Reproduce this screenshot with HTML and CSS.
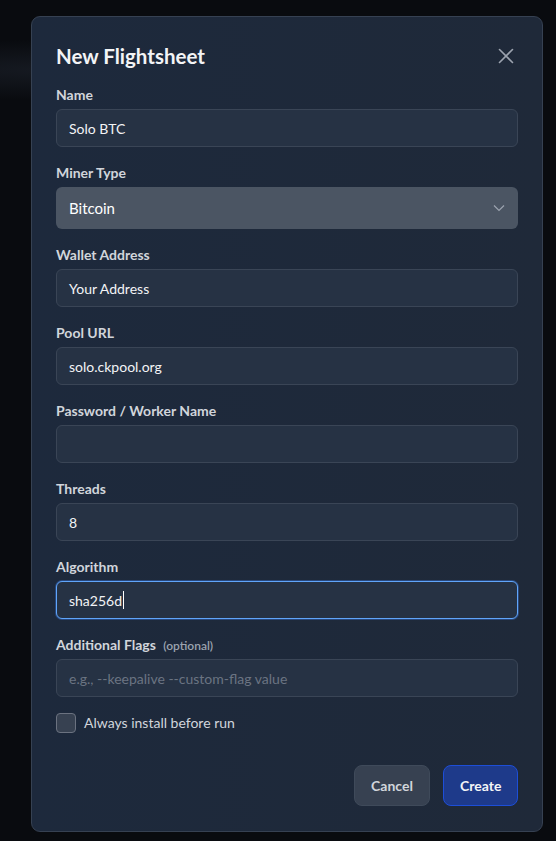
FILE: index.html
```html
<!DOCTYPE html>
<html>
<head>
<meta charset="utf-8">
<link rel="stylesheet" href="styles.css">
</head>
<body>
<div class="backdrop">
  <div class="modal">
    <div class="header">
      <h2 class="title">New Flightsheet</h2>
      <button class="close" aria-label="Close">
        <svg width="16" height="16" viewBox="0 0 16 16"><path d="M1.5 1.5 L14.5 14.5 M14.5 1.5 L1.5 14.5" stroke="#9ca3af" stroke-width="1.6" stroke-linecap="round" fill="none"/></svg>
      </button>
    </div>
    <div class="field">
      <label class="label">Name</label>
      <div class="input">Solo BTC</div>
    </div>
    <div class="field">
      <label class="label">Miner Type</label>
      <div class="select">
        <span>Bitcoin</span>
        <svg width="12" height="8" viewBox="0 0 12 8"><path d="M1 1.5 L6 6.5 L11 1.5" stroke="#9ca3af" stroke-width="1.2" fill="none"/></svg>
      </div>
    </div>
    <div class="field">
      <label class="label">Wallet Address</label>
      <div class="input">Your Address</div>
    </div>
    <div class="field">
      <label class="label">Pool URL</label>
      <div class="input">solo.ckpool.org</div>
    </div>
    <div class="field">
      <label class="label">Password / Worker Name</label>
      <div class="input"></div>
    </div>
    <div class="field">
      <label class="label">Threads</label>
      <div class="input">8</div>
    </div>
    <div class="field">
      <label class="label">Algorithm</label>
      <div class="input focus">sha256d<span class="caret"></span></div>
    </div>
    <div class="field">
      <label class="label">Additional Flags <span class="opt">(optional)</span></label>
      <div class="input placeholder">e.g., --keepalive --custom-flag value</div>
    </div>
    <div class="check-row">
      <span class="checkbox"></span>
      <span class="check-label">Always install before run</span>
    </div>
    <div class="actions">
      <button class="btn cancel">Cancel</button>
      <button class="btn create">Create</button>
    </div>
  </div>
</div>
</body>
</html>
```
FILE: styles.css
```css
* { box-sizing: border-box; }
html, body { margin: 0; padding: 0; }
body {
  background: #090b0f;
  font-family: Lato, "Noto Sans", sans-serif;
  width: 556px;
  height: 841px;
  overflow: hidden;
}
.backdrop {
  padding-top: 16px;
  padding-left: 31px;
  background: radial-gradient(ellipse 300px 30px at 60px 70px, #161a22 0%, rgba(9,11,15,0) 100%), #090b0f;
  height: 841px;
}
.modal {
  width: 512px;
  height: 816px;
  background: linear-gradient(90deg, #1d293c 0%, #1f2939 100%);
  border: 1px solid #364152;
  border-radius: 9px;
  padding: 25px 24px 0 24px;
  display: flex;
  flex-direction: column;
}
.header {
  display: flex;
  align-items: center;
  justify-content: space-between;
  height: 28px;
  margin-bottom: 15px;
}
.title {
  margin: 0;
  font-size: 20.5px;
  font-weight: 700;
  color: #f3f4f6;
  line-height: 28px;
}
.close {
  background: none;
  border: none;
  padding: 0;
  margin-right: 4px;
  width: 16px;
  height: 16px;
  display: flex;
}
.field {
  display: flex;
  flex-direction: column;
  margin-bottom: 16px;
}
.label {
  font-size: 14px;
  font-weight: 700;
  color: #d1d5db;
  line-height: 20px;
  height: 20px;
  margin-bottom: 4px;
  display: block;
}
.opt {
  font-size: 12px;
  font-weight: 600;
  color: #9ca3af;
  margin-left: 4px;
  line-height: 1;
}
.input {
  height: 38px;
  background: #263244;
  border: 1px solid #3a4556;
  border-radius: 6px;
  padding: 0 12px;
  display: flex;
  align-items: center;
  font-size: 14px;
  color: #f3f4f6;
}
.input.focus {
  border-color: #60a5fa;
  box-shadow: 0 0 0 1px rgba(59,130,246,0.35);
}
.caret {
  display: inline-block;
  width: 1px;
  height: 18px;
  background: #ffffff;
  margin-left: 1px;
}
.input.placeholder { color: #6b7482; }
.select {
  height: 42px;
  background: #4b5563;
  border-radius: 6px;
  padding: 0 13px 0 13px;
  display: flex;
  align-items: center;
  justify-content: space-between;
  font-size: 15px;
  color: #ffffff;
}
.check-row {
  display: flex;
  align-items: center;
  gap: 8px;
  height: 20px;
}
.checkbox {
  flex: none;
  width: 20px;
  height: 20px;
  border: 1px solid #6b7280;
  border-radius: 4px;
  background: #374151;
}
.check-label {
  font-size: 14px;
  color: #d1d5db;
  line-height: 20px;
}
.actions {
  display: flex;
  justify-content: flex-end;
  gap: 13px;
  margin-top: 32px;
}
.btn {
  height: 41px;
  border-radius: 8px;
  font-family: inherit;
  font-size: 14px;
  font-weight: 700;
  padding: 0 16px;
}
.cancel {
  background: #374151;
  border: 1px solid #3f4a5a;
  color: #d1d5db;
  width: 76px;
}
.create {
  background: #1e3a8a;
  border: 1px solid #1d4ed8;
  color: #f3f4f6;
  width: 75px;
}
```
